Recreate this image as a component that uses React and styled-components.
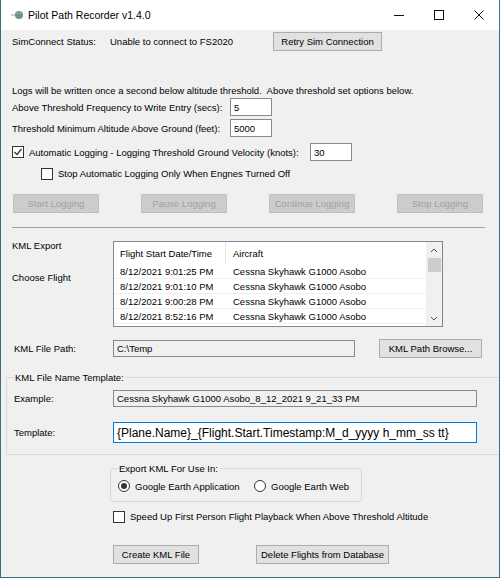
import React from 'react';
import styled, { createGlobalStyle } from 'styled-components';

const GlobalStyle = createGlobalStyle`
  html, body { margin: 0; padding: 0; background: #f0f0f0; }
  body { font-family: "Liberation Sans", Arial, sans-serif; }
  * { box-sizing: border-box; }
`;

const Window = styled.div`
  width: 500px;
  height: 578px;
  display: flex;
  flex-direction: column;
  background: #f0f0f0;
  border: 1px solid #3c6f7f;
  border-top: none;
  overflow: hidden;
  font-size: 9.5px;
  color: #000;
`;

const TitleBar = styled.div`
  height: 30px;
  flex-shrink: 0;
  background: #fff;
  display: flex;
  align-items: center;
  padding-left: 9px;
`;

const Title = styled.span`
  font-size: 10.5px;
  margin-left: 4px;
  color: #000;
`;

const Controls = styled.div`
  margin-left: auto;
  display: flex;
  height: 100%;
`;

const Ctl = styled.div`
  width: 40px;
  height: 100%;
  display: flex;
  align-items: center;
  justify-content: center;
`;

const Body = styled.div`
  display: flex;
  flex-direction: column;
  padding-left: 11px;
`;

const Row = styled.div`
  display: flex;
  align-items: center;
  height: ${p => p.$h}px;
  margin-top: ${p => p.$top || 0}px;
  padding-left: ${p => p.$indent || 0}px;
  flex-shrink: 0;
`;

const Label = styled.span`
  width: ${p => (p.$w ? `${p.$w}px` : 'auto')};
  flex-shrink: 0;
  white-space: nowrap;
  padding-left: ${p => p.$pad || 0}px;
`;

const Field = styled.input`
  width: ${p => p.$w}px;
  height: ${p => p.$h || 17}px;
  border: 1px solid ${p => (p.$focus ? '#0078d7' : '#8a8a8a')};
  background: ${p => (p.readOnly ? '#f0f0f0' : '#fff')};
  font-family: inherit;
  font-size: ${p => p.$size || 9.5}px;
  padding: 0 3px;
  margin: 0;
  color: #000;
  outline: none;
  flex-shrink: 0;
`;

const Button = styled.button`
  width: ${p => p.$w}px;
  height: 19px;
  margin-left: ${p => p.$ml || 0}px;
  background: #e1e1e1;
  border: 1px solid #adadad;
  font-family: inherit;
  font-size: 9.5px;
  color: #000;
  padding: 0;
  flex-shrink: 0;
  &:disabled {
    background: #cccccc;
    border-color: #bfbfbf;
    color: #a0a0a0;
  }
`;

const ButtonStrip = styled.div`
  display: grid;
  grid-template-columns: repeat(4, 86px);
  column-gap: 42px;
  margin-top: 14px;
  padding-left: 1px;
`;

const Separator = styled.div`
  width: 473px;
  height: 1px;
  background: #a0a0a0;
  margin-top: 14px;
`;

const ExportSection = styled.div`
  display: flex;
  margin-top: 11px;
`;

const SideLabels = styled.div`
  width: 101px;
  display: flex;
  flex-direction: column;
  gap: 18px;
  line-height: 14px;
`;

const List = styled.div`
  width: 330px;
  height: 86px;
  margin-top: 2px;
  border: 1px solid #828790;
  background: #fff;
  display: flex;
`;

const ListBody = styled.div`
  flex: 1;
  display: flex;
  flex-direction: column;
`;

const ListHeader = styled.div`
  height: 22px;
  display: flex;
  align-items: center;
`;

const HeaderCell = styled.div`
  width: ${p => (p.$w ? `${p.$w}px` : 'auto')};
  height: 100%;
  display: flex;
  align-items: center;
  padding-left: ${p => p.$pad}px;
  border-right: ${p => (p.$sep ? '1px solid #e5e5e5' : 'none')};
`;

const ListRow = styled.div`
  height: 15px;
  display: flex;
  align-items: center;
  border-bottom: 1px solid #f0f0f0;
`;

const Cell = styled.div`
  width: ${p => (p.$w ? `${p.$w}px` : 'auto')};
  padding-left: ${p => p.$pad}px;
  white-space: nowrap;
`;

const ScrollBar = styled.div`
  width: 16px;
  background: #f0f0f0;
  display: flex;
  flex-direction: column;
  align-items: center;
`;

const ScrollArrow = styled.div`
  height: 16px;
  display: flex;
  align-items: center;
  justify-content: center;
`;

const Thumb = styled.div`
  width: 13px;
  height: 14px;
  background: #cdcdcd;
`;

const Track = styled.div`
  flex: 1;
`;

const Group = styled.div`
  position: relative;
  margin-left: ${p => p.$ml}px;
  margin-top: ${p => p.$top}px;
  width: ${p => p.$w}px;
  height: ${p => p.$h}px;
  border: 1px solid #d8d8d8;
  border-radius: 3px;
  padding: ${p => p.$pt}px 0 0 7px;
  display: flex;
  flex-direction: column;
  flex-shrink: 0;
`;

const Legend = styled.span`
  position: absolute;
  top: -7px;
  left: 7px;
  padding: 0 1px;
  background: #f0f0f0;
  line-height: 13px;
`;

const Box = styled.span`
  width: 12px;
  height: 12px;
  border: 1px solid #333;
  background: #fff;
  display: inline-flex;
  align-items: center;
  justify-content: center;
  flex-shrink: 0;
  margin-right: 5px;
`;

const Radio = styled.span`
  width: 12px;
  height: 12px;
  border: 1px solid #333;
  border-radius: 50%;
  background: #fff;
  display: inline-flex;
  align-items: center;
  justify-content: center;
  flex-shrink: 0;
  margin-right: 5px;
  &::after {
    content: '';
    width: 6px;
    height: 6px;
    border-radius: 50%;
    background: ${p => (p.$on ? '#333' : 'transparent')};
  }
`;

const Option = styled.label`
  display: flex;
  align-items: center;
  width: ${p => (p.$w ? `${p.$w}px` : 'auto')};
`;

const CheckBox = ({ checked }) => (
  <Box>
    {checked && (
      <svg width="10" height="10" viewBox="0 0 10 10">
        <polyline points="1.5,5 4,7.5 8.5,2" fill="none" stroke="#333" strokeWidth="1.2" />
      </svg>
    )}
  </Box>
);

const Chevron = ({ up }) => (
  <svg width="8" height="5" viewBox="0 0 8 5">
    <polyline points={up ? '1,4 4,1 7,4' : '1,1 4,4 7,1'} fill="none" stroke="#555" strokeWidth="1" />
  </svg>
);

const flights = [
  '8/12/2021 9:01:25 PM',
  '8/12/2021 9:01:10 PM',
  '8/12/2021 9:00:28 PM',
  '8/12/2021 8:52:16 PM',
];

export default function App() {
  return (
    <>
      <GlobalStyle />
      <Window>
        <TitleBar>
          <svg width="14" height="10" viewBox="0 0 14 10">
            <line x1="1" y1="5" x2="5" y2="5" stroke="#9aa" strokeWidth="1" />
            <circle cx="9" cy="5" r="4" fill="#6f8f9a" />
            <path d="M5.5 4 A4 4 0 0 1 12.5 4 Z" fill="#7bb36b" />
          </svg>
          <Title>Pilot Path Recorder v1.4.0</Title>
          <Controls>
            <Ctl>
              <svg width="10" height="10" viewBox="0 0 10 10">
                <line x1="0" y1="5.5" x2="10" y2="5.5" stroke="#111" strokeWidth="1" />
              </svg>
            </Ctl>
            <Ctl>
              <svg width="10" height="10" viewBox="0 0 10 10">
                <rect x="0.5" y="0.5" width="9" height="9" fill="none" stroke="#111" strokeWidth="1" />
              </svg>
            </Ctl>
            <Ctl>
              <svg width="10" height="10" viewBox="0 0 10 10">
                <path d="M0.5 0.5 L9.5 9.5 M9.5 0.5 L0.5 9.5" stroke="#111" strokeWidth="1" />
              </svg>
            </Ctl>
          </Controls>
        </TitleBar>

        <Body>
          <Row $h={18} $top={2}>
            <Label $w={98}>SimConnect Status:</Label>
            <Label $w={163}>Unable to connect to FS2020</Label>
            <Button $w={109}>Retry Sim Connection</Button>
          </Row>

          <Row $h={14} $top={33}>
            <Label>Logs will be written once a second below altitude threshold.&nbsp; Above threshold set options below.</Label>
          </Row>
          <Row $h={18} $top={1}>
            <Label $w={218}>Above Threshold Frequency to Write Entry (secs):</Label>
            <Field $w={42} $h={18} defaultValue="5" />
          </Row>
          <Row $h={18} $top={3}>
            <Label $w={218}>Threshold Minimum Altitude Above Ground (feet):</Label>
            <Field $w={42} $h={18} defaultValue="5000" />
          </Row>
          <Row $h={18} $top={6}>
            <Option $w={298}>
              <CheckBox checked />
              Automatic Logging - Logging Threshold Ground Velocity (knots):
            </Option>
            <Field $w={42} $h={18} defaultValue="30" />
          </Row>
          <Row $h={13} $top={6} $indent={29}>
            <Option>
              <CheckBox />
              Stop Automatic Logging Only When Engnes Turned Off
            </Option>
          </Row>

          <ButtonStrip>
            <Button $w={86} disabled>Start Logging</Button>
            <Button $w={86} disabled>Pause Logging</Button>
            <Button $w={86} disabled>Continue Logging</Button>
            <Button $w={86} disabled>Stop Logging</Button>
          </ButtonStrip>

          <Separator />

          <ExportSection>
            <SideLabels>
              <span>KML Export</span>
              <span>Choose Flight</span>
            </SideLabels>
            <List>
              <ListBody>
                <ListHeader>
                  <HeaderCell $w={112} $pad={6} $sep>Flight Start Date/Time</HeaderCell>
                  <HeaderCell $pad={7}>Aircraft</HeaderCell>
                </ListHeader>
                {flights.map(f => (
                  <ListRow key={f}>
                    <Cell $w={112} $pad={6}>{f}</Cell>
                    <Cell $pad={7}>Cessna Skyhawk G1000 Asobo</Cell>
                  </ListRow>
                ))}
              </ListBody>
              <ScrollBar>
                <ScrollArrow><Chevron up /></ScrollArrow>
                <Thumb />
                <Track />
                <ScrollArrow><Chevron /></ScrollArrow>
              </ScrollBar>
            </List>
          </ExportSection>

          <Row $h={19} $top={12}>
            <Label $w={101} $pad={2}>KML File Path:</Label>
            <Field $w={242} readOnly defaultValue="C:\Temp" />
            <Button $w={103} $ml={24}>KML Path Browse...</Button>
          </Row>

          <Group $ml={-6} $top={19} $w={505} $h={78} $pt={12}>
            <Legend>KML File Name Template:</Legend>
            <Row $h={17}>
              <Label $w={99}>Example:</Label>
              <Field $w={364} readOnly defaultValue="Cessna Skyhawk G1000 Asobo_8_12_2021 9_21_33 PM" />
            </Row>
            <Row $h={21} $top={15}>
              <Label $w={99}>Template:</Label>
              <Field
                $w={364}
                $h={21}
                $size={12}
                $focus
                defaultValue="{Plane.Name}_{Flight.Start.Timestamp:M_d_yyyy h_mm_ss tt}"
              />
            </Row>
          </Group>

          <Group $ml={98} $top={13} $w={252} $h={34} $pt={10}>
            <Legend>Export KML For Use In:</Legend>
            <Row $h={14}>
              <Option $w={136}>
                <Radio $on />
                Google Earth Application
              </Option>
              <Option>
                <Radio />
                Google Earth Web
              </Option>
            </Row>
          </Group>

          <Row $h={13} $top={8} $indent={101}>
            <Option>
              <CheckBox />
              Speed Up First Person Flight Playback When Above Threshold Altitude
            </Option>
          </Row>

          <Row $h={19} $top={22} $indent={101}>
            <Button $w={86}>Create KML File</Button>
            <Button $w={133} $ml={57}>Delete Flights from Database</Button>
          </Row>
        </Body>
      </Window>
    </>
  );
}
